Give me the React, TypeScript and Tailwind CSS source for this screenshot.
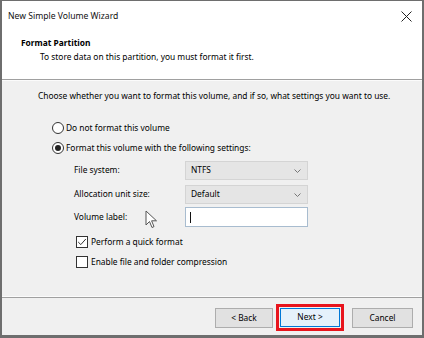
import React from "react";

const font = { fontFamily: '"Noto Sans", "Open Sans", sans-serif' };

function Radio({ checked, label }: { checked?: boolean; label: string }) {
  return (
    <div className="flex items-center h-[16px] pl-[50px]">
      <span className="w-[12px] h-[12px] rounded-full border border-[#333] bg-white flex items-center justify-center">
        {checked && <span className="w-[6px] h-[6px] rounded-full bg-[#222]" />}
      </span>
      <span className="ml-[2px]">{label}</span>
    </div>
  );
}

function Check({ checked, label }: { checked?: boolean; label: string }) {
  return (
    <div className="flex items-center h-[16px] pl-[74px]">
      <span className="w-[12px] h-[12px] border border-[#333] bg-white flex items-center justify-center">
        {checked && (
          <svg width="10" height="10" viewBox="0 0 10 10">
            <path d="M1.2 5 L3.8 7.6 L8.8 2" fill="none" stroke="#333" strokeWidth="1" />
          </svg>
        )}
      </span>
      <span className="ml-[3px]">{label}</span>
    </div>
  );
}

function Select({ value }: { value: string }) {
  return (
    <div className="w-[123px] h-[19px] bg-[#e5e5e5] border border-[#d4d4d4] flex items-center justify-between pl-[5px] pr-[6px]">
      <span>{value}</span>
      <svg width="7" height="4" viewBox="0 0 7 4">
        <path d="M0.5 0.5 L3.5 3.5 L6.5 0.5" fill="none" stroke="#777" strokeWidth="1" />
      </svg>
    </div>
  );
}

export default function App() {
  return (
    <div
      className="w-[424px] h-[338px] bg-[#6e6e6e] pt-[1px] px-[2px] pb-[3px] text-[8.4px] text-black relative"
      style={font}
    >
      <div className="w-full h-full flex flex-col bg-[#f0f0f0]">
        {/* title bar */}
        <div className="h-[30px] bg-white flex items-center justify-between pl-[6px] pr-[8px]">
          <span className="text-[8.6px] text-[#111]">New Simple Volume Wizard</span>
          <svg width="11" height="11" viewBox="0 0 11 11" className="mr-[2px]">
            <path d="M0.5 0.5 L10.5 10.5 M10.5 0.5 L0.5 10.5" stroke="#222" strokeWidth="1" />
          </svg>
        </div>
        {/* header */}
        <div className="h-[48px] bg-white flex flex-col pl-[19px] pt-[4px]">
          <span className="font-bold h-[16px] leading-[16px]">Format Partition</span>
          <span className="pl-[19px] mt-[-2px] h-[16px] leading-[16px]">
            To store data on this partition, you must format it first.
          </span>
        </div>
        <div className="h-[1px] bg-[#a0a0a0]" />
        <div className="h-[1px] bg-[#fbfbfb]" />
        {/* body */}
        <div className="flex-1 flex flex-col pt-[7px]">
          <div className="pl-[36px] h-[16px] leading-[16px] whitespace-nowrap">
            Choose whether you want to format this volume, and if so, what settings you want to use.
          </div>
          <div className="h-[16px]" />
          <Radio label="Do not format this volume" />
          <div className="h-[4px]" />
          <Radio checked label="Format this volume with the following settings:" />
          <div className="h-[5px]" />
          <div className="flex items-center pl-[72px]">
            <span className="w-[111px]">File system:</span>
            <Select value="NTFS" />
          </div>
          <div className="h-[5px]" />
          <div className="flex items-center pl-[72px]">
            <span className="w-[111px]">Allocation unit size:</span>
            <Select value="Default" />
          </div>
          <div className="h-[3px]" />
          <div className="flex items-center pl-[72px]">
            <span className="w-[111px]">Volume label:</span>
            <div className="w-[123px] h-[20px] bg-white border border-[#a8bccf] flex items-center pl-[4px]">
              <span className="w-[1px] h-[11px] bg-[#111]" />
            </div>
          </div>
          <div className="h-[7px]" />
          <Check checked label="Perform a quick format" />
          <div className="h-[4px]" />
          <Check label="Enable file and folder compression" />
        </div>
        {/* footer */}
        <div className="h-[1px] bg-[#fbfbfb]" />
        <div className="h-[1px] bg-[#a0a0a0]" />
        <div className="h-[37px] flex items-start justify-end pr-[9px] pt-[6px]">
          <div className="mt-[4px] w-[58px] h-[20px] bg-[#e1e1e1] border border-[#adadad] flex items-center justify-center">
            &lt; Back
          </div>
          <div className="ml-[3px] border-[3px] border-[#e8141c] p-[1px]">
            <div className="w-[60px] h-[19px] bg-[#e5f1fb] border border-[#0078d7] flex items-center justify-center">
              Next &gt;
            </div>
          </div>
          <div className="mt-[4px] ml-[8px] w-[61px] h-[20px] bg-[#e1e1e1] border border-[#adadad] flex items-center justify-center">
            Cancel
          </div>
        </div>
      </div>
      {/* mouse cursor */}
      <svg
        width="14"
        height="20"
        viewBox="0 0 14 20"
        className="absolute left-[145px] top-[210px]"
      >
        <path
          d="M1 1 L1 15 L4.5 11.5 L7 17.5 L9 16.6 L6.6 10.8 L11.5 10.8 Z"
          fill="white"
          stroke="#555"
          strokeWidth="1"
          strokeLinejoin="round"
        />
      </svg>
    </div>
  );
}
